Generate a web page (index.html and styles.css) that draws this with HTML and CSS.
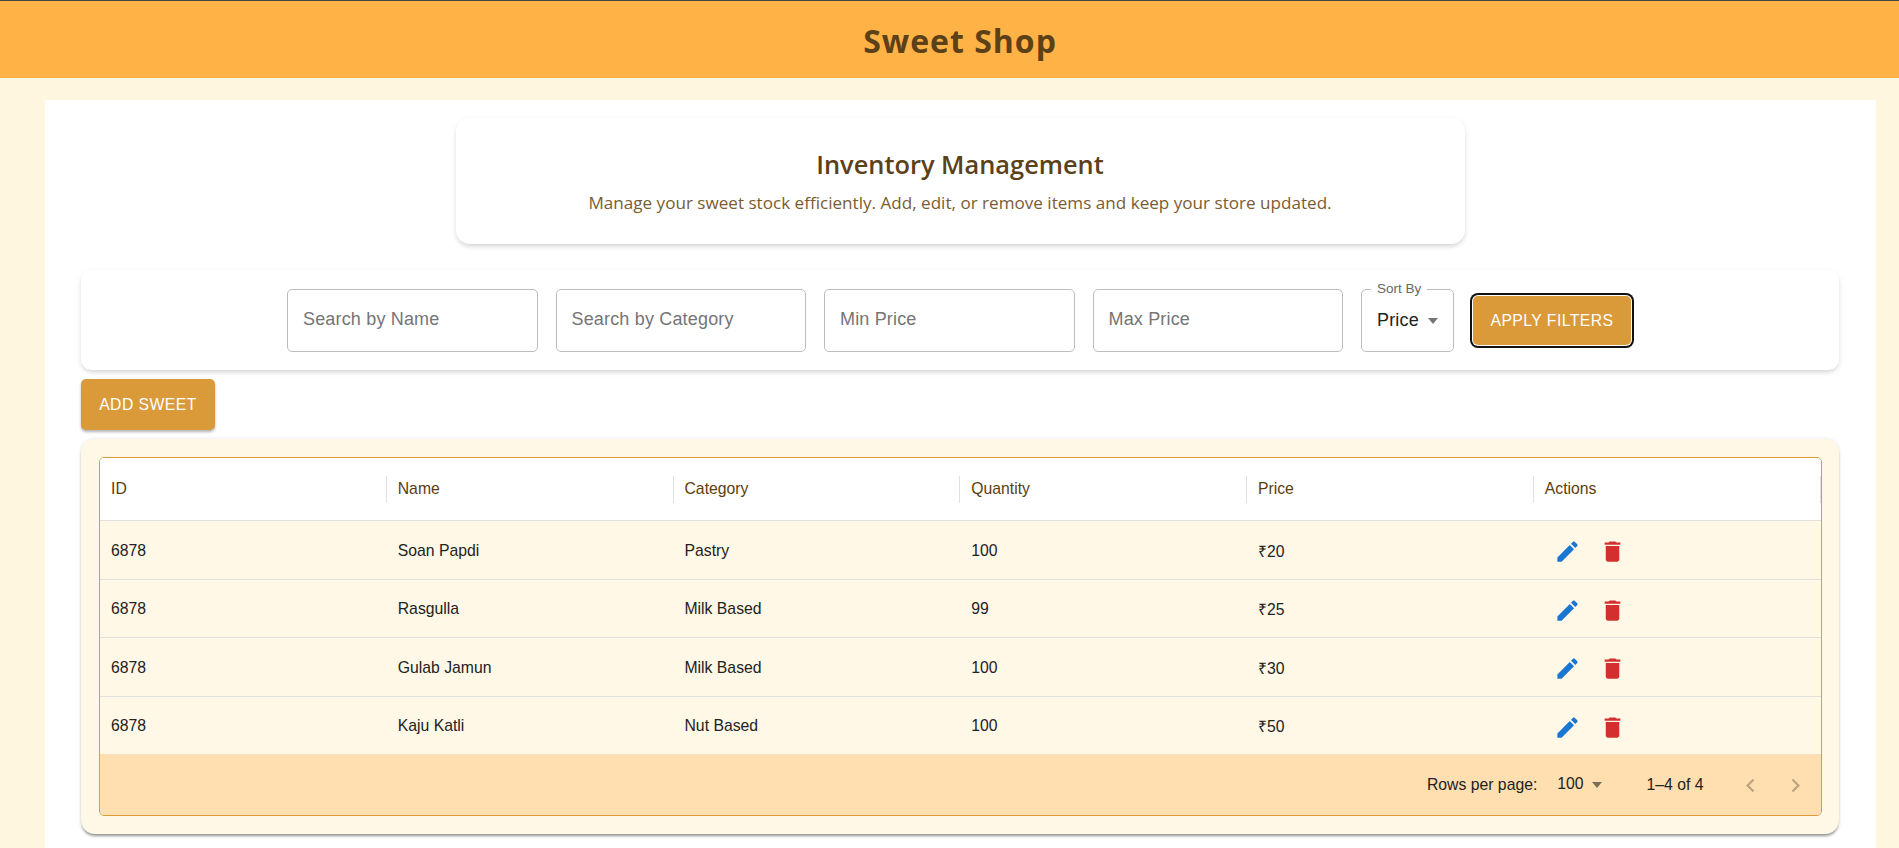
FILE: index.html
```html
<!DOCTYPE html>
<html lang="en">
  <head>
    <meta charset="UTF-8" />
    <meta name="viewport" content="width=device-width, initial-scale=1.0" />
    <title>Sweet Shop</title>
    <link rel="stylesheet" href="styles.css">
  </head>
  <body>
    <header class="topbar">
      <h1>Sweet Shop</h1>
    </header>
    <div class="page">
      <main class="sheet">
        <section class="intro">
          <h2>Inventory Management</h2>
          <p>Manage your sweet stock efficiently. Add, edit, or remove items and keep your store updated.</p>
        </section>

        <section class="filters">
          <input class="field" type="text" placeholder="Search by Name" />
          <input class="field" type="text" placeholder="Search by Category" />
          <input class="field" type="text" placeholder="Min Price" />
          <input class="field" type="text" placeholder="Max Price" />
          <div class="sort">
            <span class="sort-label">Sort By</span>
            <span class="sort-value">Price</span>
            <span class="caret"></span>
          </div>
          <button class="btn btn-focus" type="button">Apply Filters</button>
        </section>

        <button class="btn btn-add" type="button">Add Sweet</button>

        <section class="table-card">
          <div class="grid">
            <div class="row head">
              <div class="cell">ID</div>
              <div class="cell">Name</div>
              <div class="cell">Category</div>
              <div class="cell">Quantity</div>
              <div class="cell">Price</div>
              <div class="cell">Actions</div>
            </div>

            <div class="row">
              <div class="cell">6878</div>
              <div class="cell">Soan Papdi</div>
              <div class="cell">Pastry</div>
              <div class="cell">100</div>
              <div class="cell">₹20</div>
              <div class="cell actions">
                <svg class="icon edit" viewBox="0 0 24 24"><path d="M3 17.25V21h3.75L17.81 9.94l-3.75-3.75L3 17.25zM20.71 7.04c.39-.39.39-1.02 0-1.41l-2.34-2.34a.9959.9959 0 0 0-1.41 0l-1.83 1.83 3.75 3.75 1.83-1.83z"/></svg>
                <svg class="icon trash" viewBox="0 0 24 24"><path d="M6 19c0 1.1.9 2 2 2h8c1.1 0 2-.9 2-2V7H6v12zM19 4h-3.5l-1-1h-5l-1 1H5v2h14V4z"/></svg>
              </div>
            </div>

            <div class="row">
              <div class="cell">6878</div>
              <div class="cell">Rasgulla</div>
              <div class="cell">Milk Based</div>
              <div class="cell">99</div>
              <div class="cell">₹25</div>
              <div class="cell actions">
                <svg class="icon edit" viewBox="0 0 24 24"><path d="M3 17.25V21h3.75L17.81 9.94l-3.75-3.75L3 17.25zM20.71 7.04c.39-.39.39-1.02 0-1.41l-2.34-2.34a.9959.9959 0 0 0-1.41 0l-1.83 1.83 3.75 3.75 1.83-1.83z"/></svg>
                <svg class="icon trash" viewBox="0 0 24 24"><path d="M6 19c0 1.1.9 2 2 2h8c1.1 0 2-.9 2-2V7H6v12zM19 4h-3.5l-1-1h-5l-1 1H5v2h14V4z"/></svg>
              </div>
            </div>

            <div class="row">
              <div class="cell">6878</div>
              <div class="cell">Gulab Jamun</div>
              <div class="cell">Milk Based</div>
              <div class="cell">100</div>
              <div class="cell">₹30</div>
              <div class="cell actions">
                <svg class="icon edit" viewBox="0 0 24 24"><path d="M3 17.25V21h3.75L17.81 9.94l-3.75-3.75L3 17.25zM20.71 7.04c.39-.39.39-1.02 0-1.41l-2.34-2.34a.9959.9959 0 0 0-1.41 0l-1.83 1.83 3.75 3.75 1.83-1.83z"/></svg>
                <svg class="icon trash" viewBox="0 0 24 24"><path d="M6 19c0 1.1.9 2 2 2h8c1.1 0 2-.9 2-2V7H6v12zM19 4h-3.5l-1-1h-5l-1 1H5v2h14V4z"/></svg>
              </div>
            </div>

            <div class="row">
              <div class="cell">6878</div>
              <div class="cell">Kaju Katli</div>
              <div class="cell">Nut Based</div>
              <div class="cell">100</div>
              <div class="cell">₹50</div>
              <div class="cell actions">
                <svg class="icon edit" viewBox="0 0 24 24"><path d="M3 17.25V21h3.75L17.81 9.94l-3.75-3.75L3 17.25zM20.71 7.04c.39-.39.39-1.02 0-1.41l-2.34-2.34a.9959.9959 0 0 0-1.41 0l-1.83 1.83 3.75 3.75 1.83-1.83z"/></svg>
                <svg class="icon trash" viewBox="0 0 24 24"><path d="M6 19c0 1.1.9 2 2 2h8c1.1 0 2-.9 2-2V7H6v12zM19 4h-3.5l-1-1h-5l-1 1H5v2h14V4z"/></svg>
              </div>
            </div>

            <div class="pager">
              <span>Rows per page:</span>
              <span class="pager-size">100</span>
              <span class="caret caret-dark"></span>
              <span class="pager-range">1–4 of 4</span>
              <svg class="icon chevron" viewBox="0 0 24 24"><path d="M15.41 7.41 14 6l-6 6 6 6 1.41-1.41L10.83 12z"/></svg>
              <svg class="icon chevron" viewBox="0 0 24 24"><path d="M10 6 8.59 7.41 13.17 12l-4.58 4.59L10 18l6-6z"/></svg>
            </div>
          </div>
        </section>
      </main>
    </div>
  </body>
</html>
```

FILE: styles.css
```css
* {
  box-sizing: border-box;
}
body {
  margin: 0;
  font-family: "Liberation Sans", Arial, sans-serif;
  background-color: #fff6e0;
}
h1,
h2,
p {
  margin: 0;
}

.topbar {
  height: 78px;
  padding-left: 21px;
  padding-top: 1px;
  border-top: 1px solid #444;
  background-color: #ffb347;
  display: flex;
  align-items: center;
  justify-content: center;
}
.topbar h1 {
  font-family: "Open Sans", sans-serif;
  font-size: 32px;
  font-weight: 700;
  letter-spacing: 1px;
  color: #5c4018;
}

.page {
  padding: 22px 23px 0 45px;
}
.sheet {
  background-color: #fff;
  padding: 18px 37px 15px 36px;
}

.intro {
  width: 1009px;
  height: 126px;
  margin: 0 auto 26px;
  padding-top: 28px;
  text-align: center;
  background-color: #fff;
  border-radius: 14px;
  box-shadow: 0 3px 5px -1px rgba(0, 0, 0, 0.16), 0 1px 8px rgba(0, 0, 0, 0.04);
}
.intro h2 {
  font-family: "Open Sans", sans-serif;
  font-size: 25.4px;
  font-weight: 600;
  line-height: 36px;
  color: #5c4018;
}
.intro p {
  margin-top: 8px;
  font-family: "Open Sans", sans-serif;
  font-size: 17.1px;
  line-height: 26px;
  color: #7a5c32;
}

.filters {
  height: 100px;
  padding: 1px 2px 0 0;
  display: flex;
  align-items: center;
  justify-content: center;
  gap: 18px;
  background-color: #fff;
  border-radius: 11px;
  box-shadow: 0 3px 5px -1px rgba(0, 0, 0, 0.16), 0 1px 8px rgba(0, 0, 0, 0.04);
}
.field {
  width: 250.5px;
  height: 63px;
  padding: 0 15px 2px;
  font-family: inherit;
  font-size: 18px;
  letter-spacing: 0.17px;
  color: #333;
  background: #fff;
  border: 1px solid #bdbdbd;
  border-radius: 5px;
}
.field::placeholder {
  color: #757575;
  opacity: 1;
}

.sort {
  position: relative;
  width: 93px;
  height: 63px;
  padding: 0 15px 0;
  display: flex;
  align-items: center;
  gap: 9px;
  border: 1px solid #bdbdbd;
  border-radius: 5px;
}
.sort-label {
  position: absolute;
  top: -9px;
  left: 9px;
  padding: 0 6px;
  font-size: 13.5px;
  line-height: 16px;
  color: #666;
  background-color: #fff;
}
.sort-value {
  font-size: 18px;
  letter-spacing: 0.17px;
  color: #222;
}
.caret {
  width: 0;
  height: 0;
  border-left: 5.5px solid transparent;
  border-right: 5.5px solid transparent;
  border-top: 6px solid #757575;
}
.caret-dark {
  border-top-color: #7a6e57;
  margin-left: 8px;
}

.btn {
  padding: 0;
  font-family: inherit;
  font-size: 15.75px;
  font-weight: 400;
  letter-spacing: 0.45px;
  text-transform: uppercase;
  color: #fff;
  background-color: #da9a3a;
  border: none;
  border-radius: 5px;
}
.btn-focus {
  width: 158px;
  height: 49px;
  margin-left: 1px;
  box-shadow: 0 0 0 1px #fff, 0 0 0 3px #111;
}
.btn-add {
  display: block;
  width: 134px;
  height: 51px;
  margin: 9px 0;
  box-shadow: 0 2px 3px rgba(0, 0, 0, 0.3);
}

.table-card {
  padding: 18px 17.5px 18px 18px;
  background-color: #fff8e7;
  border-radius: 14px;
  box-shadow: 0 3px 3px -1px rgba(0, 0, 0, 0.4), 0 0 4px rgba(0, 0, 0, 0.1);
}
.grid {
  border: 1px solid #e09a3a;
  border-radius: 5px;
  overflow: hidden;
}
.row {
  display: grid;
  grid-template-columns: repeat(6, 1fr);
  align-items: center;
  height: 58.5px;
  font-size: 15.75px;
  color: #222;
  background-color: #fff8e7;
  border-bottom: 1px solid #e2e0dc;
}
.row:nth-last-child(2) {
  border-bottom-color: #f8dfbc;
}
.cell {
  padding: 2px 11px 0;
}
.head {
  height: 63px;
  color: #5c3d0c;
  background-color: #fff;
}
.head .cell {
  height: 27px;
  padding: 0 0 0 11px;
  line-height: 25px;
  border-right: 1px solid #e2e0dc;
}
.actions {
  display: flex;
  gap: 18px;
  padding-top: 4px;
  padding-left: 20px;
}
.icon {
  width: 27px;
  height: 27px;
  flex: none;
  display: block;
}
.edit {
  fill: #1976d2;
}
.trash {
  fill: #d32f2f;
}

.pager {
  height: 60px;
  padding-right: 12px;
  display: flex;
  align-items: center;
  justify-content: flex-end;
  font-size: 15.75px;
  color: #222;
  background-color: #ffdfb0;
}
.pager-size {
  margin-left: 20px;
  padding-bottom: 2px;
}
.pager-range {
  margin-left: 45px;
  margin-right: 33px;
}
.chevron {
  fill: rgba(0, 0, 0, 0.26);
}
.chevron + .chevron {
  margin-left: 18px;
}
```
